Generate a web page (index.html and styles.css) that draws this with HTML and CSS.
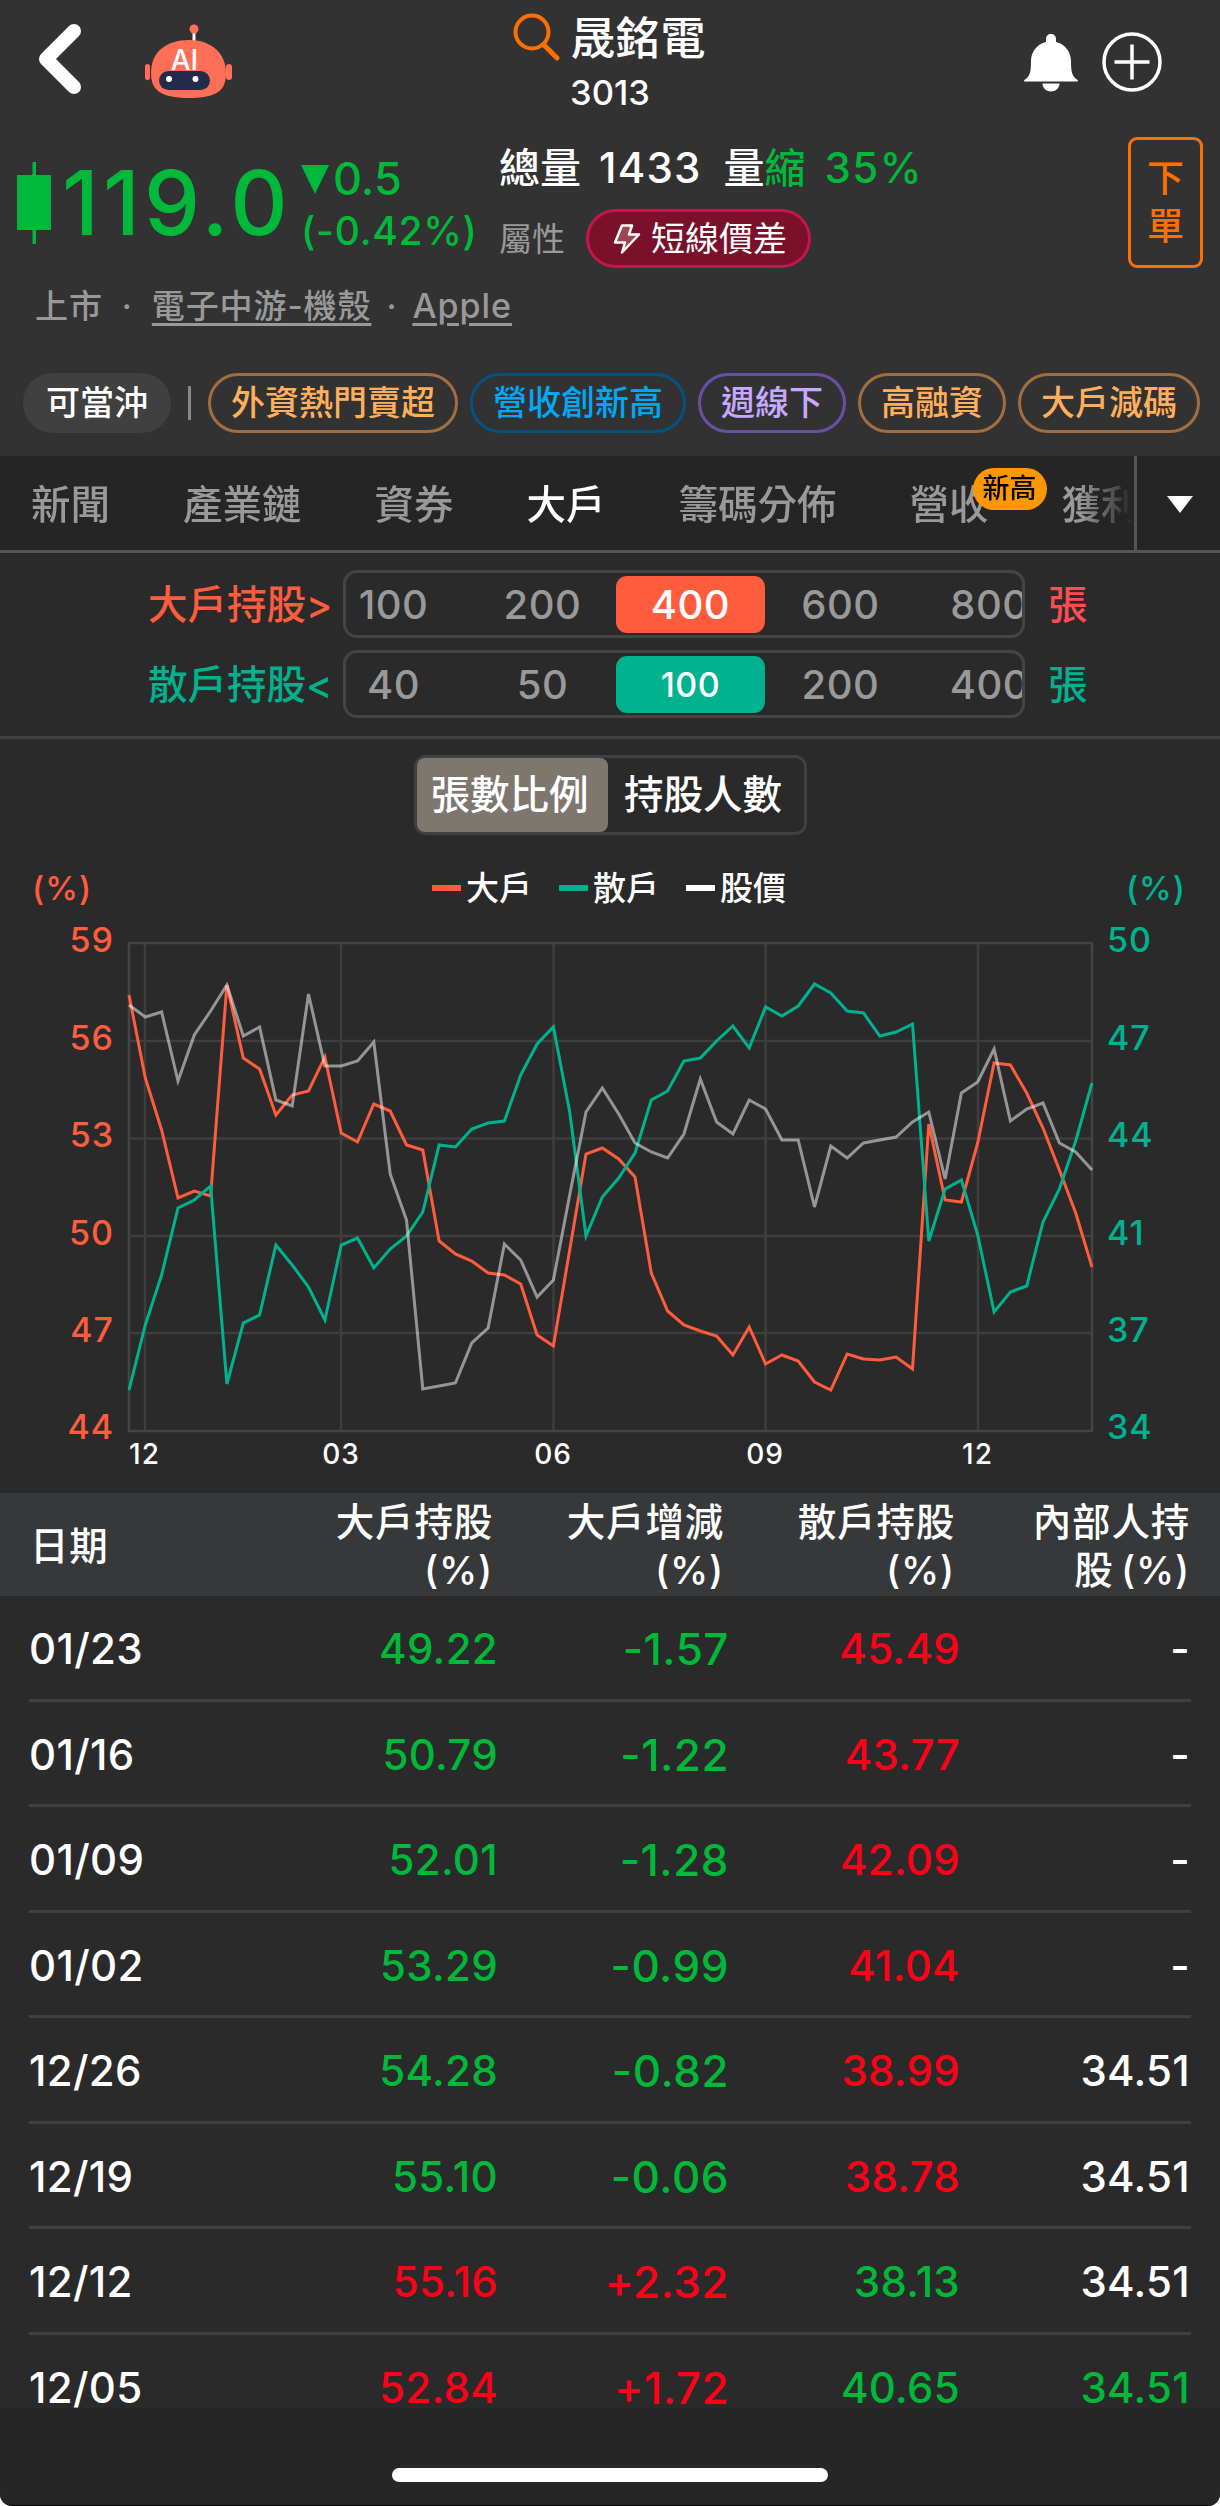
FILE: index.html
```
<!DOCTYPE html>
<html lang="zh-Hant">
<head>
    <meta charset="UTF-8">
    <meta name="viewport" content="width=device-width, initial-scale=1.0">
    <title>晟銘電 3013</title>
    <link rel="stylesheet" href="styles.css">
</head>
<body>
    <div class="app">
        <header class="header">
            <div class="topbar">
                <div class="topbar-left">
                    <svg class="icon-back" width="44" height="72" viewBox="0 0 44 72"><path d="M36 8 L8 36 L36 64" fill="none" stroke="#fff" stroke-width="14" stroke-linecap="round" stroke-linejoin="round"/></svg>
                    <svg class="icon-robot" width="90" height="76" viewBox="0 0 90 76">
                        <path d="M50 8 V20" stroke="#fff" stroke-width="3"/>
                        <circle cx="50" cy="5" r="4.5" fill="#ff6f57"/>
                        <rect x="1" y="40" width="5" height="16" rx="2.5" fill="#ff6f57"/>
                        <rect x="82" y="40" width="6" height="16" rx="3" fill="#ff6f57"/>
                        <path d="M7 49 C7 28 22 16 45 16 C67 16 82 29 82 49 C82 65 75 74 45 74 C15 74 7 65 7 49Z" fill="#ff6f57"/>
                        <rect x="15" y="47" width="51" height="19" rx="9.5" fill="#232b49"/>
                        <circle cx="25" cy="55" r="3" fill="#fff"/>
                        <circle cx="51.500" cy="55" r="3" fill="#fff"/>
                        <text x="40.500" y="45.500" class="robot-text">AI</text>
                    </svg>
                </div>
                <div class="title">
                    <div class="title-name">
                        <svg width="50" height="50" viewBox="0 0 50 50"><g fill="none" stroke="#ff6f00" stroke-width="4"><circle cx="20" cy="19" r="16.500"/><path d="M31.500 31.500 L45 45" stroke-width="5" stroke-linecap="round"/></g></svg>
                        <span>晟銘電</span>
                    </div>
                    <div class="title-code">3013</div>
                </div>
                <div class="topbar-right">
                    <svg width="54" height="58" viewBox="0 0 54 58"><path d="M27 0 C30 0 32 2 32 5 V8 C41 10 47 18 47 27 C47 38 48 42 53 45.500 C54.500 47 54 47.500 53 47.500 H1 C0 47.500 -.5 47 1 45.500 C6 42 7 38 7 27 C7 18 13 10 22 8 V5 C22 2 24 0 27 0Z M18.500 49.500 H35.500 C35.500 54 31.500 57.500 27 57.500 C22.500 57.500 18.500 54 18.500 49.500Z" fill="#fff"/></svg>
                    <svg width="62" height="62" viewBox="0 0 62 62"><g fill="none" stroke="#fff" stroke-width="3.500"><circle cx="31" cy="31" r="28"/><path d="M13.500 31 H48.500 M31 13.500 V48.500"/></g></svg>
                </div>
            </div>

            <div class="quote">
                <svg class="candle" width="34" height="82" viewBox="0 0 34 82"><path d="M15.500 0 H19 V13 H34 V68 H19 V82 H15.500 V68 H0 V13 H15.500Z" fill="#00b83a"/></svg>
                <div class="price">119.0</div>
                <div class="change">
                    <div class="change-value"><i class="down"></i>0.5</div>
                    <div class="change-rate">(-0.42%)</div>
                </div>
                <div class="volume">
                    <div class="volume-row"><span>總量</span><span class="volume-num">1433</span><span>量<b>縮</b></span><b class="volume-rate">35%</b></div>
                    <div class="attr-row">
                        <span>屬性</span>
                        <span class="attr-pill"><svg width="28" height="30" viewBox="0 0 28 30"><path d="M9 1.500 H19 L16 10.500 H26 L9 28.500 L12 18.500 H2Z" fill="#a04458" stroke="#fff" stroke-width="2.500" stroke-linejoin="round"/></svg>短線價差</span>
                    </div>
                </div>
                <button class="order" type="button">下<br>單</button>
            </div>

            <div class="meta"><span>上市</span><span class="dot">·</span><a>電子中游-機殼</a><span class="dot dot-tight">·</span><a class="brand">Apple</a></div>

            <div class="tags">
                <span class="tag tag-solid">可當沖</span>
                <span class="tag-line"></span>
                <span class="tag tag-orange">外資熱門賣超</span>
                <span class="tag tag-blue">營收創新高</span>
                <span class="tag tag-purple">週線下</span>
                <span class="tag tag-orange">高融資</span>
                <span class="tag tag-orange">大戶減碼</span>
            </div>
        </header>

        <nav class="tabs">
            <div class="tab-list">
                <span>新聞</span><span>產業鏈</span><span>資券</span><span class="active">大戶</span><span>籌碼分佈</span><span class="has-badge">營收<em>新高</em></span><span>獲利</span>
            </div>
            <div class="tab-more"><i></i></div>
        </nav>

        <section class="filters">
            <div class="filter filter-big">
                <span class="filter-label">大戶持股&gt;</span>
                <div class="options"><div class="strip"><span>100</span><span>200</span><span class="on">400</span><span>600</span><span>800</span></div></div>
                <span class="unit">張</span>
            </div>
            <div class="filter filter-small">
                <span class="filter-label">散戶持股&lt;</span>
                <div class="options"><div class="strip"><span>40</span><span>50</span><span class="on">100</span><span>200</span><span>400</span></div></div>
                <span class="unit">張</span>
            </div>
        </section>

        <section class="chart-box">
            <div class="toggle"><span class="on">張數比例</span><span>持股人數</span></div>
            <div class="legend">
                <span class="axis-unit big">(%)</span>
                <div class="legend-items"><span class="l-big">大戶</span><span class="l-small">散戶</span><span class="l-price">股價</span></div>
                <span class="axis-unit small">(%)</span>
            </div>
            <svg class="chart" width="1220" height="573" viewBox="0 0 1220 573">
                <g class="axis-left">
                    <text x="114" y="32">59</text><text x="114" y="130">56</text><text x="114" y="227">53</text>
                    <text x="114" y="325">50</text><text x="114" y="422">47</text><text x="114" y="519">44</text>
                </g>
                <g class="axis-right">
                    <text x="1107" y="32">50</text><text x="1107" y="130">47</text><text x="1107" y="227">44</text>
                    <text x="1107" y="325">41</text><text x="1107" y="422">37</text><text x="1107" y="519">34</text>
                </g>
                <g class="axis-bottom">
                    <text x="144.500" y="544">12</text><text x="341" y="544">03</text><text x="553" y="544">06</text>
                    <text x="765" y="544">09</text><text x="977.500" y="544">12</text>
                </g>
                <g transform="translate(129 23)">
                    <path class="grid" d="M0 98 H963 M0 195.500 H963 M0 293 H963 M0 390 H963 M16 0 V488 M212 0 V488 M424.500 0 V488 M636.500 0 V488 M849 0 V488"/>
                    <rect class="frame" width="963" height="488"/>
                    <g id="lines"></g>
                </g>
            </svg>
        </section>

        <section class="table">
            <div class="row head"><span>日期</span><span>大戶持股<br>(%)</span><span>大戶增減<br>(%)</span><span>散戶持股<br>(%)</span><span>內部人持<br>股&thinsp;(%)</span></div>
            <div class="rows">
                <div class="row"><span>01/23</span><span class="g">49.22</span><span class="g diff">-1.57</span><span class="r">45.49</span><span>-</span></div>
                <div class="row"><span>01/16</span><span class="g">50.79</span><span class="g diff">-1.22</span><span class="r">43.77</span><span>-</span></div>
                <div class="row"><span>01/09</span><span class="g">52.01</span><span class="g diff">-1.28</span><span class="r">42.09</span><span>-</span></div>
                <div class="row"><span>01/02</span><span class="g">53.29</span><span class="g diff">-0.99</span><span class="r">41.04</span><span>-</span></div>
                <div class="row"><span>12/26</span><span class="g">54.28</span><span class="g diff">-0.82</span><span class="r">38.99</span><span>34.51</span></div>
                <div class="row"><span>12/19</span><span class="g">55.10</span><span class="g diff">-0.06</span><span class="r">38.78</span><span>34.51</span></div>
                <div class="row"><span>12/12</span><span class="r">55.16</span><span class="r diff">+2.32</span><span class="g">38.13</span><span>34.51</span></div>
                <div class="row"><span>12/05</span><span class="r">52.84</span><span class="r diff">+1.72</span><span class="g">40.65</span><span class="g">34.51</span></div>
            </div>
        </section>

        <footer class="home"><i></i></footer>
    </div>

    <script>
    // weekly points, y measured down from the top of the plot
    const series = [
        { cls: 'line-big', y: [52,135,187,255,248,253,42,115,126,172,152,148,114,190,199,161,168,202,207,298,311,318,330,332,341,392,403,307,211,205,216,234,330,368,382,388,393,412,384,421,412,418,439,447,411,416,417,414,426,181,257,259,200,120,122,150,185,227,270,324] },
        { cls: 'line-small', y: [447,382,332,265,257,243,441,380,372,302,322,344,377,302,295,325,306,293,269,202,204,186,180,178,132,101,84,169,293,254,235,210,157,148,118,115,98,83,105,64,73,63,41,50,68,70,93,89,81,298,246,237,292,369,349,343,279,246,198,140] },
        { cls: 'line-price', y: [62,74,69,138,92,68,42,93,84,157,163,51,123,123,118,99,231,277,446,443,440,400,385,301,317,354,337,252,169,145,171,200,209,215,191,136,179,191,157,166,197,197,264,203,215,200,197,194,179,169,236,150,139,106,178,166,160,200,209,227] }
    ];
    const step = 963 / 59;
    document.getElementById('lines').innerHTML = series.map(s =>
        `<polyline class="${s.cls}" points="${s.y.map((y, i) => (i * step).toFixed(1) + ',' + y).join(' ')}"/>`
    ).join('');
    </script>
</body>
</html>
```
FILE: styles.css
```
* {
    box-sizing: border-box;
}
body {
    margin: 0;
    background: #fff;
    font-family: Inter, "Noto Sans CJK TC", sans-serif;
    font-weight: 500;
    color: #fff;
}
i, em {
    font-style: normal;
}
svg {
    display: block;
    flex: none;
}
span, a, b {
    white-space: nowrap;
}
.app {
    width: 1220px;
    height: 2506px;
    background: #2a2a2a;
    border-radius: 0 0 12px 12px;
    border-bottom: 1px solid #000;
    overflow: hidden;
}

/* header */
.header {
    height: 456px;
    background: #323232;
}
.topbar {
    display: grid;
    grid-template-columns: 1fr auto 1fr;
    height: 137px;
}
.topbar-left {
    display: flex;
    padding-left: 38px;
}
.icon-back {
    margin-top: 23px;
}
.icon-robot {
    margin: 24px 0 0 62px;
}
.robot-text {
    font-size: 28px;
    font-weight: 500;
    fill: #fff;
    text-anchor: middle;
}
.title-name {
    display: flex;
    align-items: center;
    height: 76px;
    padding-right: 4px;
    gap: 8px;
    font-size: 45px;
    line-height: 79px;
}
.title-name svg {
    margin-left: 2px;
}
.title-code {
    margin-top: -3px;
    text-align: center;
    font-size: 34.5px;
    font-weight: 550;
    line-height: 40px;
}
.topbar-right {
    display: flex;
    justify-content: flex-end;
    gap: 23px;
    padding: 31px 57px 0 0;
}
.topbar-right svg:first-child {
    margin-top: 3px;
}
.quote {
    display: flex;
    height: 131px;
    padding: 0 17px;
}
.candle {
    margin-top: 25px;
}
.price {
    width: 250px;
    padding: 26px 0 0 11px;
    font-size: 89px;
    font-weight: 500;
    line-height: 80px;
    letter-spacing: 4px;
    color: #00b83a;
}
.change {
    width: 198px;
    font-weight: 550;
    color: #00b83a;
}
.change-value {
    display: flex;
    align-items: center;
    gap: 4px;
    height: 50px;
    margin-top: 17px;
    font-size: 45px;
    line-height: 50px;
}
.down {
    border: 14px solid transparent;
    border-top: 29px solid #00b83a;
    border-bottom: 0;
}
.change-rate {
    margin-top: 4px;
    font-size: 39px;
    line-height: 46px;
    letter-spacing: 0.7px;
}
.volume {
    flex: 1;
}
.volume b {
    font-weight: 500;
    color: #00b83a;
}
.volume-row {
    display: flex;
    font-size: 41px;
    line-height: 62px;
}
.volume-num {
    margin: 0 22px 0 18px;
    font-size: 42px;
    font-weight: 500;
    letter-spacing: 1.2px;
}
.volume .volume-rate {
    margin-left: 19px;
    font-size: 42px;
    letter-spacing: 1.5px;
}
.attr-row {
    display: flex;
    align-items: center;
    margin-top: 10px;
    gap: 21px;
    font-size: 33px;
    line-height: 54px;
    font-weight: 400;
    color: #999;
}
.attr-pill {
    display: flex;
    align-items: center;
    gap: 10px;
    width: 225px;
    height: 59px;
    padding-left: 24px;
    border: 3px solid #c0184a;
    border-radius: 30px;
    background: #7a1029;
    color: #fff;
    font-size: 34px;
}
.order {
    width: 75px;
    height: 131px;
    padding: 0;
    border: 3px solid #ff6f00;
    border-radius: 9px;
    background: none;
    color: #ff6f00;
    font: inherit;
    font-size: 37px;
    line-height: 48px;
}
.meta {
    display: flex;
    height: 76px;
    padding-left: 35px;
    font-size: 33px;
    line-height: 76px;
    letter-spacing: 0.9px;
    color: #999;
}
.meta a {
    text-decoration: underline;
    text-decoration-thickness: 3px;
    text-underline-offset: 5px;
}
.meta .brand {
    font-size: 34px;
    letter-spacing: 1px;
}
.dot {
    width: 49px;
    text-align: center;
}
.dot-tight {
    width: 41px;
}
.tags {
    display: flex;
    align-items: center;
    gap: 12px;
    padding: 29px 0 0 23px;
}
.tag {
    height: 60px;
    padding: 0 20px;
    border: 3px solid;
    border-radius: 30px;
    font-size: 34px;
    line-height: 53px;
}
.tag-solid {
    border-color: #404040;
    background: #404040;
}
.tag-line {
    flex: none;
    width: 3px;
    height: 34px;
    margin: 0 5px;
    background: #888;
}
.tag-orange {
    border-color: #a36e3f;
    color: #ffaf5c;
}
.tag-blue {
    border-color: #04527f;
    color: #00a8f5;
}
.tag-purple {
    border-color: #6b4fa3;
    color: #c5a8ff;
}

/* tabs */
.tabs {
    display: flex;
    height: 97px;
    border-bottom: 3px solid #555;
    background: #252525;
    color: #999;
}
.tab-list {
    display: flex;
    gap: 73px;
    width: 1134px;
    padding-left: 31px;
    overflow: hidden;
    font-size: 39.5px;
    line-height: 98px;
    -webkit-mask-image: linear-gradient(to right, #000 1080px, transparent 1134px);
    mask-image: linear-gradient(to right, #000 1080px, transparent 1134px);
}
.active {
    color: #fff;
}
.has-badge {
    position: relative;
}
.has-badge em {
    position: absolute;
    left: 63px;
    top: 12px;
    width: 74px;
    height: 42px;
    border-radius: 21px;
    background: #ff9800;
    color: #000;
    font-size: 27px;
    line-height: 42px;
    text-align: center;
}
.tab-more {
    display: flex;
    flex: 1;
    align-items: center;
    justify-content: center;
    border-left: 3px solid #555;
}
.tab-more i {
    margin: 2px 0 0 2px;
    border: 13px solid transparent;
    border-top: 17px solid #fff;
    border-bottom: 0;
}

/* filters */
.filters {
    height: 186px;
    padding-top: 17px;
    border-bottom: 3px solid #404040;
}
.filter {
    display: flex;
    height: 68px;
    margin-bottom: 12px;
    padding-left: 148px;
    font-size: 39.5px;
    line-height: 70px;
}
.filter-label {
    width: 195px;
}
.options {
    width: 682px;
    border: 3px solid #444;
    border-radius: 14px;
    overflow: hidden;
}
.strip {
    display: flex;
    margin-left: -28px;
    padding-top: 3px;
    font-size: 40px;
    font-weight: 550;
    line-height: 57px;
    letter-spacing: 0.5px;
    color: #999;
}
.strip span {
    flex: 0 0 149px;
    padding-left: 2px;
    text-align: center;
}
.strip .on {
    padding-left: 0;
    border-radius: 11px;
    color: #fff;
}
.filter-big {
    color: #ff5c3e;
}
.filter-big .on {
    background: #ff5c3e;
}
.filter-small {
    color: #00b28f;
}
.filter-small .on {
    background: #00b28f;
    font-size: 34px;
}
.unit {
    margin-left: 23px;
}
.filter-big .unit {
    color: #ff4b55;
}

/* chart */
.chart-box {
    height: 754px;
    padding-top: 16px;
}
.toggle {
    display: flex;
    width: 393px;
    height: 80px;
    margin: 0 auto;
    border: 3px solid #404040;
    border-radius: 12px;
    font-size: 39.5px;
    line-height: 74px;
    text-align: center;
}
.toggle span {
    width: 191px;
}
.toggle .on {
    padding-right: 5px;
    border-radius: 8px;
    background: #7d776f;
}
.legend {
    display: flex;
    justify-content: space-between;
    align-items: center;
    height: 50px;
    margin: 28px 34px 7px 32px;
    line-height: 48px;
}
.axis-unit {
    font-size: 33px;
    font-weight: 500;
    letter-spacing: 1px;
}
.big {
    color: #ff5c3e;
}
.small {
    color: #00b28f;
}
.legend-items {
    display: flex;
    gap: 27px;
    font-size: 33px;
}
.legend-items span::before {
    content: "";
    display: inline-block;
    width: 29px;
    height: 6px;
    margin-right: 5px;
    vertical-align: 9px;
    background: #fff;
}
.legend-items .l-big::before {
    background: #ff5c3e;
}
.legend-items .l-small::before {
    background: #00b28f;
}
.axis-left, .axis-right {
    font-size: 34px;
    font-weight: 550;
    letter-spacing: 1px;
}
.axis-left {
    fill: #ff5c3e;
    text-anchor: end;
}
.axis-right {
    fill: #00b28f;
}
.axis-bottom {
    font-size: 28px;
    font-weight: 550;
    letter-spacing: 1px;
    fill: #fff;
    text-anchor: middle;
}
.grid, .frame {
    fill: none;
    stroke: #3e3e3e;
    stroke-width: 2.5;
}
.frame {
    stroke: #444;
}
polyline {
    fill: none;
    stroke-width: 3;
}
.line-big {
    stroke: #ff5c3e;
}
.line-small {
    stroke: #00b28f;
}
.line-price {
    stroke: rgba(255, 255, 255, 0.5);
}

/* table */
.row {
    display: grid;
    grid-template-columns: 200px 269px 231px 231px 231px;
    height: 105.5px;
    margin: 0 29px;
    border-bottom: 3px solid #404040;
    font-size: 42px;
    font-weight: 550;
    line-height: 106px;
    letter-spacing: 0.3px;
    text-align: right;
}
.row span:first-child {
    text-align: left;
}
.row span:last-child {
    margin-right: 1px;
}
.row .g {
    color: #00b83a;
}
.row .r {
    color: #ff0019;
}
.row .diff {
    font-size: 44px;
    letter-spacing: 0.5px;
}
.head {
    height: 103px;
    margin: 0;
    padding: 2px 29px 0 30px;
    border: 0;
    background: #363839;
    grid-template-columns: 200px 263px 231px 231px 236px;
    align-items: center;
    font-size: 38.5px;
    font-weight: 500;
    line-height: 48px;
    letter-spacing: 0.8px;
}
.rows {
    height: 812px;
    overflow: hidden;
}
.home {
    height: 98px;
    padding-top: 60px;
    background: #262626;
}
.home i {
    display: block;
    width: 436px;
    height: 14px;
    margin: 0 auto;
    border-radius: 7px;
    background: #fff;
}
```
